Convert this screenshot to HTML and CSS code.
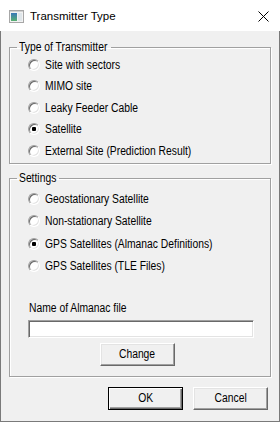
FILE: index.html
```html
<!DOCTYPE html>
<html>
<head>
<meta charset="utf-8">
<link rel="stylesheet" href="styles.css">
</head>
<body>
<div class="window">
  <div class="titlebar">
    <svg class="appicon" width="15" height="13" viewBox="0 0 15 13">
      <defs>
        <linearGradient id="g" x1="0" y1="0" x2="0" y2="1">
          <stop offset="0" stop-color="#3a78b8"/>
          <stop offset="1" stop-color="#58b070"/>
        </linearGradient>
      </defs>
      <rect x="0.5" y="0.5" width="14" height="12" fill="#f2f2f2" stroke="#a7a7a7"/>
      <rect x="2" y="3" width="6" height="8" fill="url(#g)"/>
      <rect x="9" y="3" width="4" height="8" fill="#dfe6ea"/>
      <rect x="1" y="1" width="13" height="1" fill="#d0d0d0"/>
    </svg>
    <span class="title">Transmitter Type</span>
    <svg class="close" width="11" height="11" viewBox="0 0 11 11">
      <path d="M0.5 0.5 L10.5 10.5 M10.5 0.5 L0.5 10.5" stroke="#000" stroke-width="1"/>
    </svg>
  </div>
  <div class="body">
    <fieldset class="group g1">
      <legend><span class="nt">Type of Transmitter</span></legend>
      <div class="opt"><span class="radio"></span><span class="nt">Site with sectors</span></div>
      <div class="opt"><span class="radio"></span><span class="nt">MIMO site</span></div>
      <div class="opt"><span class="radio"></span><span class="nt">Leaky Feeder Cable</span></div>
      <div class="opt"><span class="radio on"></span><span class="nt">Satellite</span></div>
      <div class="opt"><span class="radio"></span><span class="nt">External Site (Prediction Result)</span></div>
    </fieldset>
    <fieldset class="group g2">
      <legend><span class="nt">Settings</span></legend>
      <div class="opt o2"><span class="radio"></span><span class="nt">Geostationary Satellite</span></div>
      <div class="opt o2"><span class="radio"></span><span class="nt">Non-stationary Satellite</span></div>
      <div class="opt o2"><span class="radio on"></span><span class="nt">GPS Satellites (Almanac Definitions)</span></div>
      <div class="opt o2"><span class="radio"></span><span class="nt">GPS Satellites (TLE Files)</span></div>
      <div class="label"><span class="nt">Name of Almanac file</span></div>
      <div class="input"></div>
      <div class="btn change"><span class="nt">Change</span></div>
    </fieldset>
    <div class="actions">
      <div class="btn default"><span class="nt">OK</span></div>
      <div class="btn"><span class="nt">Cancel</span></div>
    </div>
  </div>
</div>
</body>
</html>
```
FILE: styles.css
```css
html, body {
  margin: 0;
  padding: 0;
  background: #f0f0f0;
}
.window {
  width: 280px;
  height: 422px;
  display: flex;
  flex-direction: column;
  font-family: "Liberation Sans", Arial, sans-serif;
  font-size: 12px;
  color: #000;
}
/* narrow dialog font: Arial-metric text squeezed horizontally */
.nt {
  display: inline-block;
  white-space: nowrap;
  transform: scaleX(0.86);
  transform-origin: 0 50%;
}
.titlebar {
  height: 31px;
  background: #fff;
  display: flex;
  align-items: center;
  flex-shrink: 0;
}
.appicon {
  margin-left: 9px;
  margin-top: 1px;
}
.title {
  font-size: 11.5px;
  margin-left: 6px;
  margin-top: 1px;
}
.close {
  margin-left: auto;
  margin-right: 11px;
  margin-top: 1px;
}
.body {
  flex: 1;
  background: #f0f0f0;
  border: 1px solid #7a7a7a;
  border-top: none;
  padding: 9px 8px 0 8px;
  display: flex;
  flex-direction: column;
}
.group {
  margin: 0;
  padding: 0 16px 0 18px;
  border: 1px solid #a0a0a0;
  box-shadow: inset 1px 1px #fff, 1px 1px #fff;
  min-width: 0;
}
.group legend {
  padding: 0 2px;
  margin-left: -11px;
  line-height: 14px;
  height: 14px;
  white-space: nowrap;
}
.g1 legend { width: 90px; }
.g2 legend { width: 38px; }
.g1 {
  padding-bottom: 1px;
}
.g2 {
  margin-top: 7.5px;
  padding-top: 3px;
  padding-bottom: 10.5px;
}
.opt {
  height: 21.5px;
  display: flex;
  align-items: center;
  white-space: nowrap;
}
.opt.o2 {
  height: 22.3px;
}
.radio {
  width: 10px;
  height: 10px;
  border: 1px solid;
  border-color: #a0a0a0 #fff #fff #a0a0a0;
  border-radius: 50%;
  box-shadow: inset 1px 1px #696969, inset -1px -1px #e3e3e3;
  background: #fff;
  margin-right: 5px;
  display: flex;
  align-items: center;
  justify-content: center;
  flex-shrink: 0;
}
.radio.on::after {
  content: "";
  width: 4px;
  height: 4px;
  background: #000;
  border-radius: 1px;
}
.label {
  margin-top: 24px;
  height: 14px;
  line-height: 14px;
  padding-left: 1px;
}
.input {
  margin-top: 4.8px;
  height: 16px;
  background: #fff;
  border: 1px solid;
  border-color: #a0a0a0 #fff #fff #a0a0a0;
  box-shadow: inset 1px 1px #696969, inset -1px -1px #e3e3e3;
}
.btn {
  width: 73px;
  height: 21px;
  line-height: 21px;
  text-align: center;
  background: #f0f0f0;
  border: 1px solid;
  border-color: #fff #696969 #696969 #fff;
  box-shadow: inset -1px -1px #a0a0a0, inset 1px 1px #e3e3e3;
}
.btn .nt {
  transform-origin: 50% 50%;
}
.change {
  margin-top: 5px;
  margin-left: 72px;
}
.btn.default {
  border-color: #000;
  box-shadow: inset 1px 1px #fff, inset -1px -1px #696969, inset -2px -2px #a0a0a0;
}
.actions {
  display: flex;
  justify-content: flex-end;
  gap: 10px;
  margin-top: 9.5px;
  padding-right: 3px;
}
```
